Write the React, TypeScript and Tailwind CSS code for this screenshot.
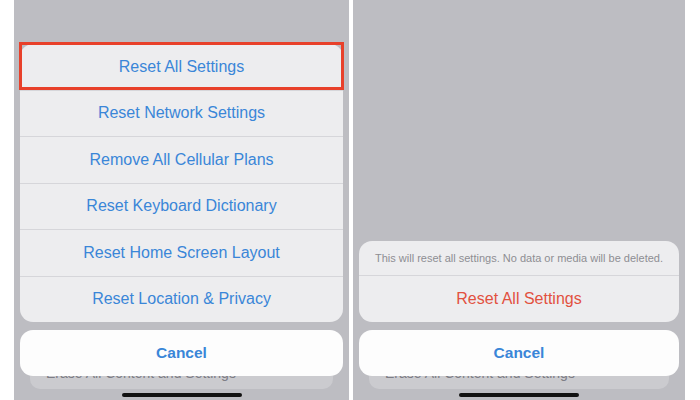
import React from 'react';

const options = [
  'Reset All Settings',
  'Reset Network Settings',
  'Remove All Cellular Plans',
  'Reset Keyboard Dictionary',
  'Reset Home Screen Layout',
  'Reset Location & Privacy',
];

const BottomPart: React.FC = () => (
  <>
    <div className="mt-[8px] h-[46px] rounded-[13px] bg-[#fdfdfd] flex items-center justify-center text-[15.5px] font-bold text-[#3a86d8] relative z-10">
      Cancel
    </div>
    {/* peeking card behind the sheet */}
    <div className="mx-[10px] h-[13px] rounded-b-[10px] bg-[#cbcbcf] overflow-hidden">
      <div className="-mt-[12px] pl-[16px] text-[14px] leading-[18px] text-[#7d7d85]">
        Erase All Content and Settings
      </div>
    </div>
    <div className="mt-[4px] mb-[3px] h-[4px] w-[120px] self-center rounded-full bg-[#111]" />
  </>
);

const App: React.FC = () => {
  return (
    <div
      className="w-[700px] h-[400px] bg-white flex pl-[14px] gap-[4px]"
      style={{ fontFamily: '"Liberation Sans", Arial, sans-serif' }}
    >
      {/* left phone */}
      <div className="w-[335px] h-full bg-[#bdbdc2] flex flex-col justify-end px-[6px]">
        <div className="h-[278px] rounded-[13px] bg-[#ededef] flex flex-col">
          {options.map((o, i) => (
            <div
              key={o}
              className={`relative flex-1 flex items-center justify-center text-[16px] text-[#3a86d8] ${
                i < options.length - 1 ? 'border-b border-[#d6d6da]' : ''
              }`}
            >
              {o}
              {i === 0 && (
                <div className="absolute -left-[1px] -right-[1px] -top-[2px] bottom-0 border-[3px] border-[#e8402a]" />
              )}
            </div>
          ))}
        </div>
        <BottomPart />
      </div>

      {/* right phone */}
      <div className="w-[332px] h-full bg-[#bdbdc2] flex flex-col justify-end px-[6px]">
        <div className="h-[81px] rounded-[13px] bg-[#ededef] flex flex-col">
          <div className="h-[35px] border-b border-[#d6d6da] flex items-center justify-center text-[11px] text-[#8e8e93]">
            This will reset all settings. No data or media will be deleted.
          </div>
          <div className="flex-1 flex items-center justify-center text-[16px] text-[#e2513f]">
            Reset All Settings
          </div>
        </div>
        <BottomPart />
      </div>
    </div>
  );
};

export default App;
